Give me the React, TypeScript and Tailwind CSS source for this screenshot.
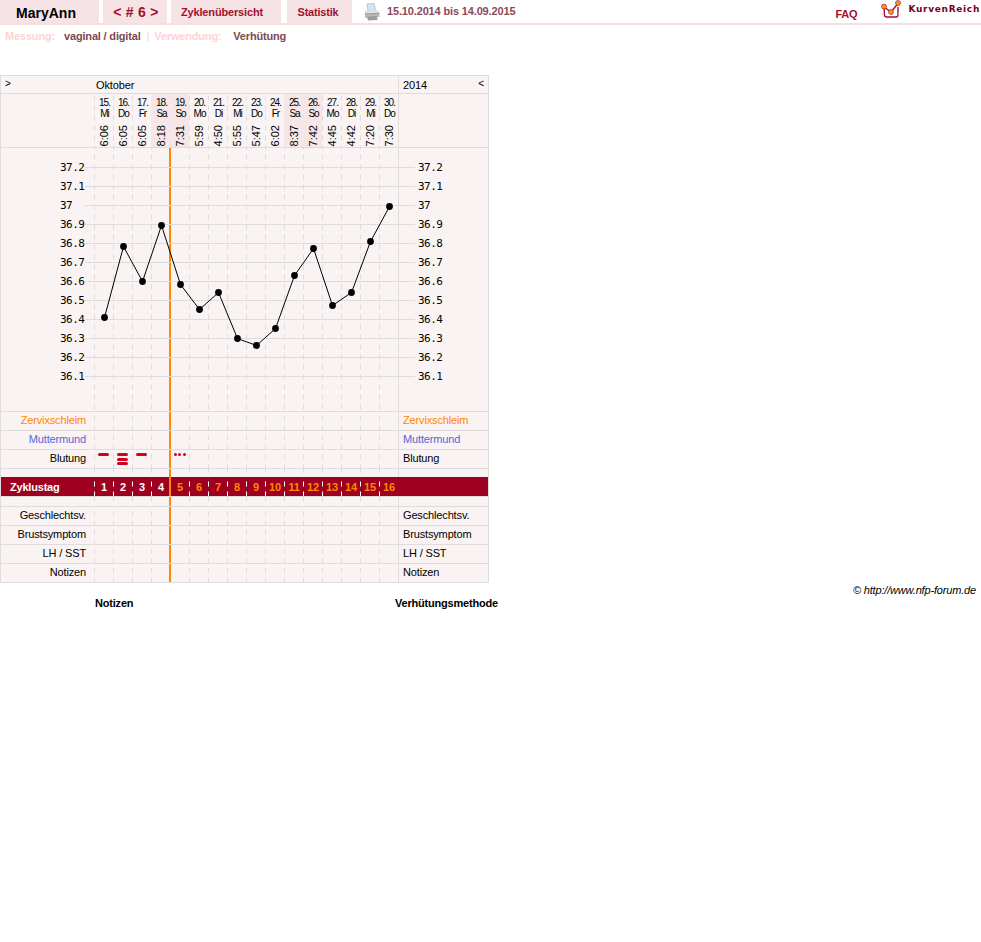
const days = [
  ["15.", "Mi", "6:06"], ["16.", "Do", "6:05"], ["17.", "Fr", "6:05"], ["18.", "Sa", "8:18"],
  ["19.", "So", "7:31"], ["20.", "Mo", "5:59"], ["21.", "Di", "4:50"], ["22.", "Mi", "5:55"],
  ["23.", "Do", "5:47"], ["24.", "Fr", "6:02"], ["25.", "Sa", "8:37"], ["26.", "So", "7:42"],
  ["27.", "Mo", "4:45"], ["28.", "Di", "4:42"], ["29.", "Mi", "7:20"], ["30.", "Do", "7:30"],
];
const temps = ["37.2", "37.1", "37", "36.9", "36.8", "36.7", "36.6", "36.5", "36.4", "36.3", "36.2", "36.1"];
const ys = [317, 246, 281, 225, 284, 309, 292, 338, 345, 328, 275, 248, 305, 292, 241, 206];
const pts = ys.map((y, i) => [10.5 + i * 19, y - 147.5]);
const dash = "bg-[linear-gradient(#e0dcdc_50%,transparent_50%)] bg-[length:1px_10px] bg-repeat-y bg-left";
const dashWhite = "bg-[linear-gradient(#ffffff_50%,transparent_50%)] bg-[length:1px_10px] bg-repeat-y bg-left";

function Cells({ render, band = false }: { render?: (i: number) => React.ReactNode; band?: boolean }) {
  return (
    <div className="flex w-[304px] h-full">
      {days.map((_, i) => (
        <div key={i} className={`relative w-[19px] h-full ${band ? dashWhite : dash}`}>
          {i === 4 && <div className="absolute left-[-1px] top-0 bottom-0 w-[2px] bg-[#ff8800]" />}
          {render && render(i)}
        </div>
      ))}
    </div>
  );
}

function Row({ left, right, color = "", cells }: { left?: string; right?: string; color?: string; cells?: (i: number) => React.ReactNode }) {
  return (
    <div className={`flex h-[19px] border-b border-[#e0dcdc] tracking-[-0.15px]`}>
      <div className={`w-[93px] pr-[8px] text-right text-[11px] leading-[16px] ${color}`}>{left}</div>
      <Cells render={cells} />
      <div className={`w-[90px] border-l border-[#e0dcdc] pl-[4px] text-[11px] leading-[16px] ${color}`}>{right}</div>
    </div>
  );
}

function TempColumn({ side }: { side: "left" | "right" }) {
  return (
    <div className="pt-[10px]">
      {temps.map((t) => (
        <div key={t} className="flex items-center h-[19px]">
          {side === "right" && <div className="w-[16px] h-px bg-[#e0dcdc]" />}
          <div className={`pt-[2px] font-['DejaVu_Sans_Mono',monospace] text-[11px] tracking-[-0.5px] ${side === "left" ? "w-[25px] ml-[59px]" : "ml-[3px]"}`}>{t}</div>
          {side === "left" && <div className="w-[9px] h-px bg-[#e0dcdc]" />}
        </div>
      ))}
    </div>
  );
}

function Printer() {
  return (
    <svg width="18" height="18" viewBox="0 0 18 18" className="ml-[11px]">
      <path d="M4 1 L11 0.5 L13 8 L5 8 Z" fill="#d5e4f2" stroke="#9fb4c8" strokeWidth="0.7" />
      <path d="M2 8 L14 7 L16.5 9.5 L16.5 14 L2 15 Z" fill="#b8bcc0" />
      <path d="M2 8 L14 7 L16.5 9.5 L3 10.5 Z" fill="#e2e4e6" />
      <path d="M4 13.5 L14 13 L14.5 17 L5 17.5 Z" fill="#9a9ea3" />
      <path d="M2 11 L16 10.5" stroke="#85898e" strokeWidth="0.7" />
    </svg>
  );
}

function Logo() {
  return (
    <svg width="21" height="20" viewBox="0 0 21 20">
      <path d="M3 7 L3.5 15 Q3.5 17 6 17 L15 17 Q17 17 17 15 L17 7" fill="#fff" stroke="#a0103c" strokeWidth="1.4" />
      <path d="M3 7 L10 12 L17 3.5" fill="none" stroke="#a0103c" strokeWidth="1.4" />
      <path d="M0 14 H3 M17 14 H20 M7 19 V18 M13 19 V18" stroke="#e5dcdc" strokeWidth="1" />
      <circle cx="3" cy="6.5" r="2.5" fill="#f39a1a" stroke="#a0103c" strokeWidth="0.6" />
      <circle cx="10" cy="12" r="2.5" fill="#f39a1a" stroke="#a0103c" strokeWidth="0.6" />
      <circle cx="17" cy="3" r="2.5" fill="#f39a1a" stroke="#a0103c" strokeWidth="0.6" />
    </svg>
  );
}

const tab = "h-[23px] bg-[#f5e3e5] flex items-center justify-center";

function Pill() {
  return <div className="w-[11px] h-[3px] rounded-full bg-[#d0021b]" />;
}

function bleeding(i: number) {
  if (i === 0 || i === 2) return <div className="flex justify-center pt-[3px]"><Pill /></div>;
  if (i === 1) return <div className="flex flex-col items-center gap-[1.5px] pt-[3px]"><Pill /><Pill /><Pill /></div>;
  if (i === 4)
    return (
      <div className="flex justify-center gap-[1.5px] pt-[3px]">
        <div className="w-[3px] h-[3px] rounded-full bg-[#d0021b]" />
        <div className="w-[3px] h-[3px] rounded-full bg-[#d0021b]" />
        <div className="w-[3px] h-[3px] rounded-full bg-[#d0021b]" />
      </div>
    );
  return null;
}

export default function App() {
  return (
    <div className="min-h-[942px] bg-white text-black font-['Liberation_Sans',Arial,sans-serif]">
      <header className="flex items-start h-[25px] border-b-2 border-[#f5dfe1]">
        <div className={`${tab} w-[99px] text-[14px] font-bold pr-[7px] pt-[3px]`}>MaryAnn</div>
        <div className={`${tab} w-[64px] ml-[4px] text-[14px] font-bold text-[#a5102c] pt-[2px] pl-[2px] tracking-[0.3px]`}>{"< # 6 >"}</div>
        <div className={`${tab} w-[110px] ml-[4px] text-[11px] font-bold text-[#a5102c] pr-[8px] pt-[2px] tracking-[-0.15px]`}>Zyklenübersicht</div>
        <div className={`${tab} w-[65px] ml-[6px] text-[11px] font-bold text-[#a5102c] pr-[3px] pt-[2px] tracking-[-0.2px]`}>Statistik</div>
        <div className="h-[23px] flex items-center">
          <Printer />
          <span className="ml-[6px] text-[11px] font-bold text-[#8b4a58] tracking-[-0.15px]">15.10.2014 bis 14.09.2015</span>
        </div>
        <div className="ml-auto flex items-start h-[23px]">
          <span className="mt-[8px] text-[11px] leading-[13px] font-bold text-[#a5102c] tracking-[-0.2px]">FAQ</span>
          <div className="ml-[24px]"><Logo /></div>
          <span className="ml-[6px] mt-[3px] mr-[1px] font-['DejaVu_Sans',sans-serif] text-[9px] leading-[13px] font-bold text-[#7a0018] tracking-[0.7px]">KurvenReich</span>
        </div>
      </header>

      <div className="flex h-[50px] pt-[5px] pl-[5px] text-[11px] leading-[13px] font-bold tracking-[-0.17px]">
        <span className="w-[59px] text-[#fcd3d5]">Messung:</span>
        <span className="text-[#7d4a54]">vaginal / digital</span>
        <span className="ml-[6px] font-normal text-[#fcd3d5]">|</span>
        <span className="ml-[5px] w-[79px] text-[#fcd3d5]">Verwendung:</span>
        <span className="text-[#7d4a54]">Verhütung</span>
      </div>

      <div className="w-[489px] bg-[#f9f3f3] border-x border-t border-[#e0dcdc]">
        <div className="flex h-[18px] border-b border-[#e0dcdc] text-[11px] leading-[18px] tracking-[-0.1px]">
          <div className="w-[93px] pl-[4px] text-[10px] leading-[16px]">&gt;</div>
          <div className="w-[304px] pl-[2px]">Oktober</div>
          <div className="flex justify-between w-[90px] border-l border-[#e0dcdc] pl-[4px] pr-[4px]">
            <span>2014</span>
            <span className="text-[10px] leading-[16px]">&lt;</span>
          </div>
        </div>

        <div className="flex h-[54px] border-b border-[#e0dcdc]">
          <div className="w-[93px]" />
          <div className="flex w-[304px] h-full">
            {days.map((d) => {
              const weekend = d[1] === "Sa" || d[1] === "So";
              return (
                <div key={d[0]} className={`flex flex-col items-center w-[19px] h-full pt-[3px] pl-[2px] ${weekend ? "bg-[#f5e6e8]" : dash}`}>
                  <div className="text-[10px] leading-[11px] tracking-[-1px] text-center">{d[0]}</div>
                  <div className="text-[10px] leading-[11px] tracking-[-1px] text-center">{d[1]}</div>
                  <div className="mt-auto mb-px text-[11px] leading-[13px] [writing-mode:vertical-rl] rotate-180">{d[2]}</div>
                </div>
              );
            })}
          </div>
          <div className="w-[90px] border-l border-[#e0dcdc]" />
        </div>

        <div className="flex h-[264px] border-b border-[#e0dcdc]">
          <div className="w-[93px] overflow-hidden"><TempColumn side="left" /></div>
          <div className="relative w-[304px] h-full">
            <Cells />
            <svg width="304" height="263" className="absolute left-0 top-0" fill="none">
              {temps.map((t, i) => (
                <line key={t} x1="0" x2="304" y1={19.5 + i * 19} y2={19.5 + i * 19} stroke="#e0dcdc" strokeWidth="1" />
              ))}
              <polyline points={pts.map((p) => p.join(",")).join(" ")} stroke="#000" strokeWidth="1" />
              {pts.map((p, i) => (
                <circle key={i} cx={p[0]} cy={p[1]} r="3.4" fill="#000" />
              ))}
            </svg>
          </div>
          <div className="w-[90px] border-l border-[#e0dcdc]"><TempColumn side="right" /></div>
        </div>

        <Row left="Zervixschleim" right="Zervixschleim" color="text-[#ff8800]" />
        <Row left="Muttermund" right="Muttermund" color="text-[#5468d0]" />
        <Row left="Blutung" right="Blutung" cells={bleeding} />

        <div className="flex h-[8px]">
          <div className="w-[93px]" />
          <Cells />
          <div className="w-[90px] border-l border-[#e0dcdc]" />
        </div>

        <div className="flex h-[20px] bg-[#9e0020] border-b border-[#e0dcdc] text-[11px] leading-[20px] font-bold tracking-[-0.2px]">
          <div className="w-[93px] pl-[9px] text-white">Zyklustag</div>
          <Cells
            band
            render={(i) => (
              <div className={`text-center pl-px ${i < 4 ? "text-white" : "text-[#ff8800]"}`}>{i + 1}</div>
            )}
          />
          <div className="w-[90px]" />
        </div>

        <div className="flex h-[10px] border-b border-[#e0dcdc]">
          <div className="w-[93px]" />
          <Cells />
          <div className="w-[90px] border-l border-[#e0dcdc]" />
        </div>

        <Row left="Geschlechtsv." right="Geschlechtsv." />
        <Row left="Brustsymptom" right="Brustsymptom" />
        <Row left="LH / SST" right="LH / SST" />
        <Row left="Notizen" right="Notizen" />
      </div>

      <div className="pt-px pr-[5px] text-right text-[11px] leading-[13px] italic tracking-[-0.17px]">© http://www.nfp-forum.de</div>
      <div className="flex pl-[95px] text-[11px] leading-[12px] font-bold tracking-[-0.2px]">
        <span className="w-[300px]">Notizen</span>
        <span>Verhütungsmethode</span>
      </div>
    </div>
  );
}
